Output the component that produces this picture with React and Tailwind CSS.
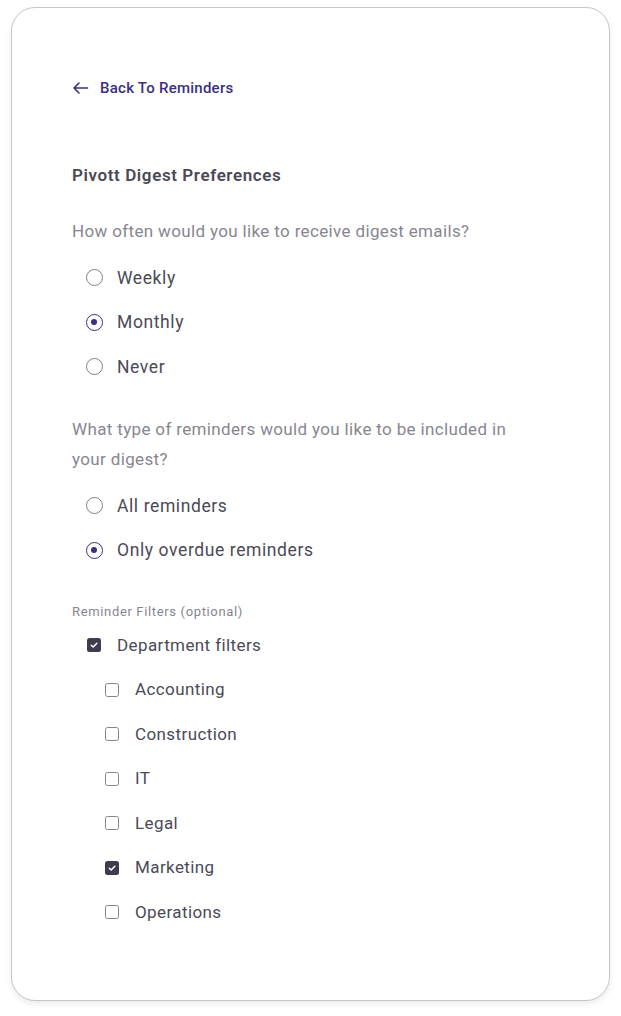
import { useState } from "react";

const FREQUENCIES = ["Weekly", "Monthly", "Never"];
const REMINDER_TYPES = ["All reminders", "Only overdue reminders"];
const DEPARTMENTS = ["Accounting", "Construction", "IT", "Legal", "Marketing", "Operations"];

export default function App() {
  const [frequency, setFrequency] = useState("Monthly");
  const [reminderType, setReminderType] = useState("Only overdue reminders");
  const [deptFilters, setDeptFilters] = useState(true);
  const [departments, setDepartments] = useState(["Marketing"]);

  function toggleDept(name) {
    setDepartments((prev) =>
      prev.includes(name) ? prev.filter((d) => d !== name) : [...prev, name]
    );
  }

  return (
    <div className="min-h-screen bg-white pl-[11px] pt-[7px] font-['Roboto','Liberation_Sans',sans-serif]">
      <div className="w-[599px] h-[994px] rounded-[24px] border-[1.5px] border-[#c6c6c6] bg-white shadow-[0_3px_6px_rgba(0,0,0,0.08)] pl-[60px] pt-[70px]">
        <a href="#" className="flex items-center h-5 text-[15px] font-medium text-[#3b2f80] tracking-[0.25px]">
          <svg width="17" height="16" viewBox="0 0 17 16" fill="none" className="mr-[11px]">
            <path d="M15.5 8H2M7 3 2 8l5 5" stroke="#3b2f80" strokeWidth="1.6" strokeLinecap="round" strokeLinejoin="round" />
          </svg>
          Back To Reminders
        </a>

        <h1 className="mt-[65px] h-6 leading-6 text-[17px] font-semibold text-[#4a4956] tracking-[0.6px]">
          Pivott Digest Preferences
        </h1>

        <p className="mt-[29px] leading-[30px] text-[17px] text-[#87868f] tracking-[0.35px]">
          How often would you like to receive digest emails?
        </p>
        <div className="mt-[9.5px]">
          {FREQUENCIES.map((f) => (
            <Radio key={f} label={f} checked={frequency === f} onChange={() => setFrequency(f)} />
          ))}
        </div>

        <p className="mt-[25px] w-[445px] leading-[30px] text-[17px] text-[#87868f] tracking-[0.35px]">
          What type of reminders would you like to be included in your digest?
        </p>
        <div className="mt-[9.5px]">
          {REMINDER_TYPES.map((t) => (
            <Radio key={t} label={t} checked={reminderType === t} onChange={() => setReminderType(t)} />
          ))}
        </div>

        <p className="mt-[31px] h-4 leading-4 text-[13px] text-[#87868f] tracking-[0.65px]">
          Reminder Filters (optional)
        </p>
        <div className="mt-[3.5px]">
          <Checkbox label="Department filters" checked={deptFilters} onChange={() => setDeptFilters(!deptFilters)} />
          {DEPARTMENTS.map((d) => (
            <Checkbox key={d} label={d} indent checked={departments.includes(d)} onChange={() => toggleDept(d)} />
          ))}
        </div>
      </div>
    </div>
  );
}

function Radio({ label, checked, onChange }) {
  return (
    <label className="flex items-center h-[44.5px] pl-[13.5px] cursor-pointer" onClick={onChange}>
      <span
        className={`flex items-center justify-center w-[17px] h-[17px] rounded-full border-[1.5px] ${
          checked ? "border-[#3b2f80]" : "border-[#7f7e88]"
        }`}
      >
        {checked && <span className="w-[6px] h-[6px] rounded-full bg-[#3b2f80]" />}
      </span>
      <span className="ml-[14.5px] text-[17.5px] text-[#4b4a57] tracking-[0.6px]">{label}</span>
    </label>
  );
}

function Checkbox({ label, checked, indent, onChange }) {
  return (
    <label
      className={`flex items-center h-[44.5px] cursor-pointer ${indent ? "pl-[33px]" : "pl-[15px]"}`}
      onClick={onChange}
    >
      <span
        className={`flex items-center justify-center w-[14px] h-[14px] rounded-[2.5px] ${
          checked ? "bg-[#403c50]" : "border-[1.5px] border-[#85848e]"
        }`}
      >
        {checked && (
          <svg width="10" height="10" viewBox="0 0 10 10" fill="none">
            <path d="M2.3 5.2 4.2 7 7.8 3.2" stroke="white" strokeWidth="1.5" strokeLinecap="round" strokeLinejoin="round" />
          </svg>
        )}
      </span>
      <span className="ml-[16px] text-[17px] text-[#4b4a57] tracking-[0.4px]">{label}</span>
    </label>
  );
}
